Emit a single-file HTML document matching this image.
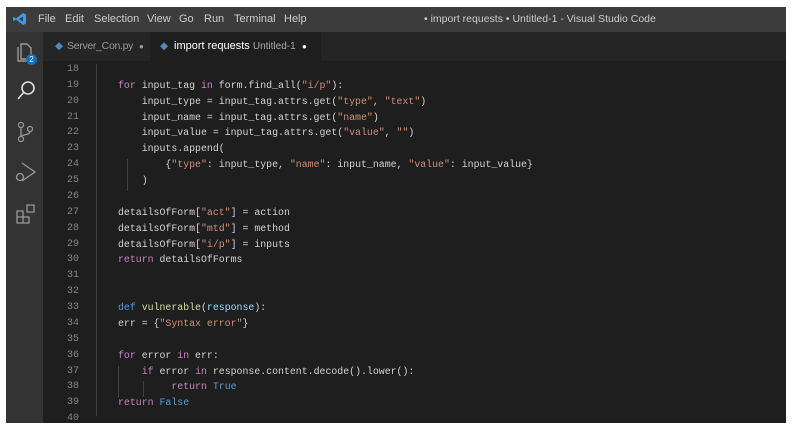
<!DOCTYPE html>
<html><head><style>
body{margin:0;width:800px;height:427px;background:#fff;position:relative;overflow:hidden;font-family:"Liberation Sans",sans-serif}
.win{position:absolute;left:6px;top:7px;width:780px;height:416px;background:#1e1e1e}
.title{position:absolute;left:0;top:0;width:780px;height:25px;background:#3c3c3c;color:#ccc;font-size:11px}
.title span{position:absolute;top:6px}
.act{position:absolute;left:0;top:25px;width:37px;height:391px;background:#333}
.tabs{position:absolute;left:37px;top:25px;width:743px;height:29px;background:#252526}
.tab{position:absolute;top:0;height:29px;font-size:10.5px;line-height:29px}
.code{position:absolute;left:37px;top:54px;right:0;bottom:0;font-family:"Liberation Mono",monospace;font-size:9.9px;color:#d4d4d4}
.ln{position:absolute;left:0;width:36px;text-align:right;color:#858585;font-size:10px}
.l{position:absolute;left:75px;white-space:pre}
.k{color:#c586c0}.s{color:#ce9178}.b{color:#569cd6}.f{color:#dcdcaa}.v{color:#9cdcfe}
.g{position:absolute;width:1px;background:#404040}
</style></head><body>
<div class="win">
<div class="title">
<svg style="position:absolute;left:7px;top:5px" width="14" height="14" viewBox="0 0 14 14"><path d="M10 1L13 2.5V11.5L10 13L3 7.5L1 9L0 8.5V5.5L1 5L3 6.5L10 1ZM10 4.5L6 7L10 9.5Z" fill="#3e9be9"/></svg>
<span style="left:32px">File</span><span style="left:59px">Edit</span><span style="left:88px">Selection</span><span style="left:141px">View</span><span style="left:173px">Go</span><span style="left:198px">Run</span><span style="left:228px">Terminal</span><span style="left:278px">Help</span>
<span style="left:418px;font-size:10.5px">• import requests • Untitled-1 - Visual Studio Code</span>
</div>
<div class="act">
<svg style="position:absolute;left:9px;top:8px" width="22" height="24" viewBox="0 0 22 24" fill="none" stroke="#999" stroke-width="1.4"><path d="M6 4h6l4 4v11H6zM3 7v14h10"/></svg>
<div style="position:absolute;left:20px;top:22px;width:11px;height:11px;border-radius:6px;background:#0e70c0;color:#fff;font-size:8px;text-align:center;line-height:11px">2</div>
<svg style="position:absolute;left:9px;top:48px" width="22" height="22" viewBox="0 0 22 22" fill="none" stroke="#ddd" stroke-width="1.6"><circle cx="13" cy="8" r="6"/><path d="M9 12L3 19"/></svg>
<svg style="position:absolute;left:9px;top:89px" width="22" height="22" viewBox="0 0 22 22" fill="none" stroke="#999" stroke-width="1.3"><circle cx="6" cy="4" r="2.5"/><circle cx="6" cy="18" r="2.5"/><circle cx="15" cy="8" r="2.5"/><path d="M6 6.5v9M15 10.5c0 4-9 3-9 5"/></svg>
<svg style="position:absolute;left:7px;top:128px" width="24" height="24" viewBox="0 0 24 24" fill="none" stroke="#999" stroke-width="1.3"><path d="M9 3l13 9-13 9"/><circle cx="7" cy="17" r="3.5"/></svg>
<svg style="position:absolute;left:9px;top:171px" width="22" height="22" viewBox="0 0 22 22" fill="none" stroke="#999" stroke-width="1.3"><path d="M2 8h6v6H2zM2 14h6v6H2zM8 14h6v6H8zM12 2h7v7h-7z"/></svg>
</div>
<div class="tabs">
<div class="tab" style="left:0;width:107px;color:#999"><span style="position:absolute;left:12px;color:#4b8bbe">◆</span><span style="position:absolute;left:24px;font-size:10.5px;letter-spacing:-0.3px">Server_Con.py</span><span style="position:absolute;left:96px;font-size:8px">●</span></div>
<div class="tab" style="left:107px;width:171px;background:#1e1e1e;color:#fff"><span style="position:absolute;left:10px;color:#4b8bbe">◆</span><span style="position:absolute;left:24px;font-size:11px">import requests <span style="color:#aaa;font-size:10px">Untitled-1</span></span><span style="position:absolute;left:152px;font-size:8px">●</span></div>
</div>
<div class="code">
<div class="g" style="left:53px;top:3px;height:352px"></div>
<div class="g" style="left:84px;top:98px;height:32px"></div>
<div class="g" style="left:75px;top:305px;height:32px"></div>
<div class="g" style="left:100px;top:320px;height:16px"></div>
<div class="ln" style="top:3px">18</div>
<div class="ln" style="top:19px">19</div><div class="l" style="top:19px"><span class="k">for</span> input_tag <span class="k">in</span> form.find_all(<span class="s">"i/p"</span>):</div>
<div class="ln" style="top:35px">20</div><div class="l" style="top:35px">    input_type = input_tag.attrs.get(<span class="s">"type"</span>, <span class="s">"text"</span>)</div>
<div class="ln" style="top:51px">21</div><div class="l" style="top:51px">    input_name = input_tag.attrs.get(<span class="s">"name"</span>)</div>
<div class="ln" style="top:66px">22</div><div class="l" style="top:66px">    input_value = input_tag.attrs.get(<span class="s">"value"</span>, <span class="s">""</span>)</div>
<div class="ln" style="top:82px">23</div><div class="l" style="top:82px">    inputs.append(</div>
<div class="ln" style="top:98px">24</div><div class="l" style="top:98px">        {<span class="s">"type"</span>: input_type, <span class="s">"name"</span>: input_name, <span class="s">"value"</span>: input_value}</div>
<div class="ln" style="top:114px">25</div><div class="l" style="top:114px">    )</div>
<div class="ln" style="top:130px">26</div>
<div class="ln" style="top:146px">27</div><div class="l" style="top:146px">detailsOfForm[<span class="s">"act"</span>] = action</div>
<div class="ln" style="top:162px">28</div><div class="l" style="top:162px">detailsOfForm[<span class="s">"mtd"</span>] = method</div>
<div class="ln" style="top:178px">29</div><div class="l" style="top:178px">detailsOfForm[<span class="s">"i/p"</span>] = inputs</div>
<div class="ln" style="top:193px">30</div><div class="l" style="top:193px"><span class="k">return</span> detailsOfForms</div>
<div class="ln" style="top:209px">31</div>
<div class="ln" style="top:225px">32</div>
<div class="ln" style="top:241px">33</div><div class="l" style="top:241px"><span class="b">def</span> <span class="f">vulnerable</span>(<span class="v">response</span>):</div>
<div class="ln" style="top:257px">34</div><div class="l" style="top:257px">err = {<span class="s">"Syntax error"</span>}</div>
<div class="ln" style="top:273px">35</div>
<div class="ln" style="top:289px">36</div><div class="l" style="top:289px"><span class="k">for</span> error <span class="k">in</span> err:</div>
<div class="ln" style="top:305px">37</div><div class="l" style="top:305px">    <span class="k">if</span> error <span class="k">in</span> response.content.decode().lower():</div>
<div class="ln" style="top:320px">38</div><div class="l" style="top:320px">         <span class="k">return</span> <span class="b">True</span></div>
<div class="ln" style="top:336px">39</div><div class="l" style="top:336px"><span class="k">return</span> <span class="b">False</span></div>
<div class="ln" style="top:352px">40</div>
</div>
</div>
</body></html>
